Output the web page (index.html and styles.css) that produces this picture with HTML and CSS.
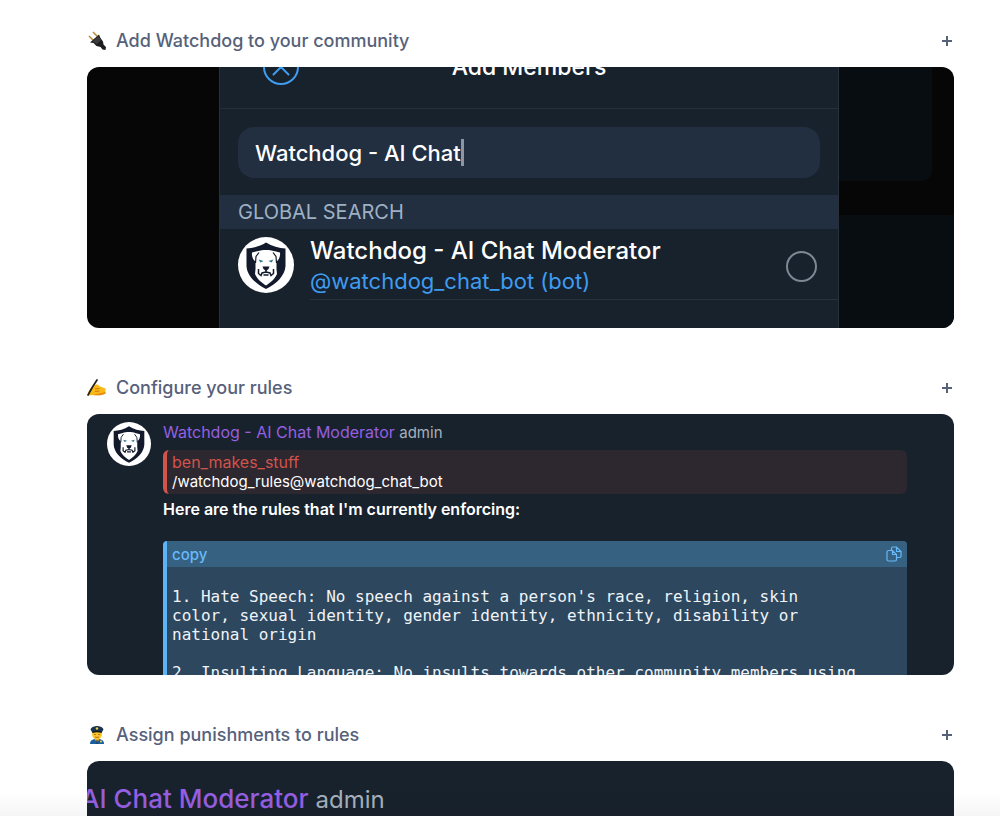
FILE: index.html
```
<!DOCTYPE html>
<html lang="en">
<head>
  <meta charset="UTF-8">
  <meta name="viewport" content="width=device-width, initial-scale=1.0">
  <title>Watchdog - Getting Started</title>
  <link rel="stylesheet" href="styles.css">
</head>
<body>
  <!-- Shared logo -->
  <svg class="sprite" aria-hidden="true">
    <symbol id="watchdog-logo" viewBox="0 0 56 56">
      <circle cx="28" cy="28" r="28" fill="#fff"/>
      <path d="M28 5.500C22 9.500 15 11 8.500 11.500V29C9 39 18 47 28 52C38 47 47 39 47.500 29V11.500C41 11 34 9.500 28 5.500Z" fill="#121a2b"/>
      <path d="M20 14C24 12.500 32 12.500 36 14L42 15.500C42.500 19 41 23 38.500 24.500L38.500 32L39 37C37 42 32 46 28 48.500C24 46 19 42 17 37L17.500 32L17.500 24.500C15 23 13.500 19 14 15.500Z" fill="#fff"/>
      <path d="M21 15.500L18 19.500L17.500 26M35 15.500L38 19.500L38.500 26" fill="none" stroke="#121a2b" stroke-width="1.200"/>
      <path d="M20.500 22.500L25.500 24L22.500 25.500ZM35.500 22.500L30.500 24L33.500 25.500Z" fill="#2c7488"/>
      <path d="M24.500 29.500H31.500L30.500 32L28 34L25.500 32Z" fill="#121a2b"/>
      <path d="M28 33V35L24 36L23 38.500L20.500 36.500V32M28 35L32 36L33 38.500L35.500 36.500V32M25.500 38H30.500" fill="none" stroke="#121a2b" stroke-width="1.500"/>
    </symbol>
  </svg>

  <main class="steps">
    <section class="step">
      <h2 class="step-title">
        <button type="button" class="step-toggle">
          <svg class="emoji" viewBox="0 0 20 20" aria-hidden="true">
            <path d="M2 5L7 10M6 1L11 6" stroke="#b98a35" stroke-width="1.500"/>
            <path d="M12 3.500L13.500 7L16 10.500L16.500 13.500L19 16L18.500 19L15.500 18.500L13.500 16L9.500 15L6.500 12L3 11.500Z" fill="#1d1d1f"/>
            <path d="M5.500 10.500L11.500 5L14 9L10 13Z" fill="#3b3b3e"/>
          </svg>
          <span class="step-name">Add Watchdog to your community</span>
          <svg class="plus" viewBox="0 0 12 12" aria-hidden="true"><path d="M6 1V11M1 6H11" stroke="currentColor" stroke-width="2"/></svg>
        </button>
      </h2>
      <div class="shot shot-search">
        <div class="dialog">
          <div class="dialog-head">
            <button type="button" class="close" aria-label="Close">
              <svg viewBox="0 0 36 36"><circle cx="18" cy="18" r="17" /><path d="M10.500 10.500L25.500 25.500M25.500 10.500L10.500 25.500"/></svg>
            </button>
            <h3>Add Members</h3>
          </div>
          <div class="search">
            <input type="text" value="Watchdog - AI Chat" aria-label="Search members">
            <span class="caret"></span>
          </div>
          <div class="group">GLOBAL SEARCH</div>
          <label class="result">
            <svg class="avatar" aria-hidden="true"><use href="#watchdog-logo"/></svg>
            <span class="result-body">
              <span class="result-text">
                <span class="result-name">Watchdog - AI Chat Moderator</span>
                <span class="result-handle">@watchdog_chat_bot (bot)</span>
              </span>
              <input type="radio" name="member">
            </span>
          </label>
        </div>
        <div class="backdrop">
          <div class="backdrop-top"></div>
          <div class="backdrop-bottom"></div>
        </div>
      </div>
    </section>

    <section class="step">
      <h2 class="step-title">
        <button type="button" class="step-toggle">
          <svg class="emoji" viewBox="0 0 20 20" aria-hidden="true">
            <path d="M1 15C2 11 5 8 8 7C10 6 12 7 12 8L18.500 10.500V15.500C15 17.500 10 17.500 6 17L1 17.500Z" fill="#fbb916"/>
            <path d="M8 11L12.500 10.500M8 13.500L12.500 13" stroke="#d37b10" stroke-width="1"/>
            <path d="M6 17L18.500 14V15.500C15 17.500 10 17.500 6 17Z" fill="#e58a12"/>
            <path d="M10 2L5.500 9L1 17" fill="none" stroke="#222" stroke-width="1.700" stroke-linecap="round"/>
          </svg>
          <span class="step-name">Configure your rules</span>
          <svg class="plus" viewBox="0 0 12 12" aria-hidden="true"><path d="M6 1V11M1 6H11" stroke="currentColor" stroke-width="2"/></svg>
        </button>
      </h2>
      <div class="shot shot-rules">
        <svg class="avatar" aria-hidden="true"><use href="#watchdog-logo"/></svg>
        <div class="message">
          <p class="author">Watchdog - AI Chat Moderator <span class="role">admin</span></p>
          <blockquote>
            <span class="quote-author">ben_makes_stuff</span>
            <span class="quote-text">/watchdog_rules@watchdog_chat_bot</span>
          </blockquote>
          <p class="intro">Here are the rules that I'm currently enforcing:</p>
          <div class="code">
            <button type="button" class="copy">
              copy
              <svg viewBox="0 0 16 16" aria-hidden="true">
                <path d="M2.500 4.500H6.500L10.500 8.500V13.500Q10.500 15 9 15H2.500Q1 15 1 13.500V6Q1 4.500 2.500 4.500ZM6.500 4.500V8.500H10.500M5.500 4.500V2.500Q5.500 1 7 1H10.500L15 5.500V10Q15 11.500 13.500 11.500H10.500M10.500 1V5.500H15"/>
              </svg>
            </button>
<pre>1. Hate Speech: No speech against a person's race, religion, skin
color, sexual identity, gender identity, ethnicity, disability or
national origin

2. Insulting Language: No insults towards other community members using</pre>
          </div>
        </div>
      </div>
    </section>

    <section class="step">
      <h2 class="step-title">
        <button type="button" class="step-toggle">
          <svg class="emoji" viewBox="0 0 20 20" aria-hidden="true">
            <path d="M3 19C3 15.500 5 14 10 14S17 15.500 17 19Z" fill="#1d5f9c"/>
            <path d="M8 12H12V15L10 17L8 15Z" fill="#eda421"/>
            <ellipse cx="10" cy="9" rx="5" ry="5.500" fill="#fdc52b"/>
            <path d="M3.500 4.500C4 2 8 1 10 1S16 2 16.500 4.500L15 7H5Z" fill="#193451"/>
            <path d="M5 7Q10 5 15 7L14.500 8Q10 6.500 5.500 8Z" fill="#111"/>
            <circle cx="10" cy="3.500" r="1.200" fill="#f6cf42"/>
            <path d="M8 9V10M12 9V10" stroke="#553208"/>
            <path d="M8 12Q10 13 12 12" fill="none" stroke="#9a5a13" stroke-width=".8"/>
            <path d="M10 15V19" stroke="#12385f"/>
            <circle cx="14" cy="16.500" r="1" fill="#f6cf42"/>
          </svg>
          <span class="step-name">Assign punishments to rules</span>
          <svg class="plus" viewBox="0 0 12 12" aria-hidden="true"><path d="M6 1V11M1 6H11" stroke="currentColor" stroke-width="2"/></svg>
        </button>
      </h2>
      <div class="shot shot-punish">
        <p class="author">AI Chat Moderator <span class="role">admin</span></p>
      </div>
    </section>
  </main>
  <div class="page-fade"></div>
</body>
</html>
```
FILE: styles.css
```
* {
  box-sizing: border-box;
}

body {
  margin: 0;
  background-color: #ffffff;
  font-family: Inter, Arial, sans-serif;
}

h2, h3, p, pre, blockquote {
  margin: 0;
}

button {
  font: inherit;
  color: inherit;
  background: none;
  border: none;
  padding: 0;
  cursor: pointer;
}

.sprite {
  display: none;
}

.steps {
  display: flex;
  flex-direction: column;
  gap: 46px;
  padding: 27px 46px 46px 87px;
}

.step {
  display: flex;
  flex-direction: column;
  gap: 12px;
}

.step-title {
  font-size: 18px;
  font-weight: 500;
  line-height: 28px;
  color: #56617a;
}

.step-toggle {
  display: flex;
  align-items: center;
  width: 100%;
  text-align: left;
}

.emoji {
  width: 20px;
  height: 20px;
  margin-right: 9px;
  flex: none;
}

.step-name {
  flex: 1;
}

.plus {
  width: 12px;
  height: 12px;
  margin-right: 1px;
}

.shot {
  height: 261px;
  overflow: hidden;
  border-radius: 12px;
  background-color: #18222d;
  color: #ffffff;
}

/* Member search */
.shot-search {
  display: flex;
  background-color: #060606;
  padding-left: 132px;
}

.dialog {
  flex: 1;
  margin-top: -26px;
  border: solid #27303b;
  border-width: 0 1px;
  background-color: #18222d;
}

.dialog-head {
  display: grid;
  grid-template-columns: 1fr auto 1fr;
  align-items: center;
  height: 68px;
  padding: 8px 43px 24px;
  border-bottom: 1px solid #25303d;
}

.dialog-head h3 {
  font-size: 23px;
  font-weight: 500;
  line-height: 36px;
}

.close, .close svg {
  display: block;
  width: 36px;
  height: 36px;
}

.close svg {
  fill: none;
  stroke: #3f9cf0;
  stroke-width: 2;
  stroke-linecap: round;
}

.search {
  display: flex;
  align-items: center;
  height: 51px;
  margin: 18px 18px 17px;
  padding: 0 17px;
  border-radius: 16px;
  background-color: #212f40;
}

.search input {
  field-sizing: content;
  padding: 0;
  border: none;
  outline: none;
  background: none;
  color: #ffffff;
  font: 500 22px Inter, Arial, sans-serif;
}

.caret {
  width: 3px;
  height: 27px;
  background-color: #8a96a6;
}

.group {
  padding-left: 18px;
  background-color: #212f40;
  color: #9fb0c3;
  font-size: 20px;
  line-height: 34px;
}

.result {
  display: flex;
  align-items: center;
  padding-left: 18px;
}

.result .avatar {
  width: 56px;
  height: 56px;
  margin-right: 16px;
}

.result-body {
  flex: 1;
  display: flex;
  align-items: center;
  justify-content: space-between;
  padding: 7px 21px 3px 0;
  border-bottom: 1px solid #27313d;
}

.result-text {
  display: flex;
  flex-direction: column;
  line-height: 30px;
}

.result-name {
  font-size: 24px;
  font-weight: 500;
}

.result-handle {
  font-size: 22px;
  color: #3f9cf0;
}

.result input {
  appearance: none;
  width: 31px;
  height: 31px;
  margin: 0;
  border: 2px solid #7d8894;
  border-radius: 50%;
}

.backdrop {
  display: flex;
  flex-direction: column;
  width: 115px;
}

.backdrop-top {
  height: 114px;
  margin-right: 22px;
  border-bottom-right-radius: 10px;
  background-color: #070d11;
}

.backdrop-bottom {
  flex: 1;
  margin-top: 34px;
  background-color: #070d11;
}

/* Rules message */
.shot-rules {
  display: flex;
  gap: 12px;
  padding: 8px 47px 0 20px;
}

.shot-rules .avatar {
  flex: none;
  width: 44px;
  height: 44px;
}

.message {
  flex: 1;
  font-size: 16px;
}

.author {
  color: #965fe0;
  line-height: 20px;
}

.role {
  color: #a5b0bc;
  font-weight: 400;
}

.message .role {
  font-size: 15px;
}

blockquote {
  display: flex;
  flex-direction: column;
  margin-top: 7px;
  padding: 3px 5px;
  border-left: 4px solid #d0544a;
  border-radius: 6px;
  background-color: #2d2730;
  line-height: 19px;
}

.quote-author {
  color: #d0544a;
}

.quote-text {
  font-size: 15px;
}

.intro {
  margin: 5px 0 22px;
  font-weight: 600;
  line-height: 20px;
}

.code {
  border-left: 4px solid #5cb3f5;
  border-radius: 4px 4px 0 0;
  background-color: #2c475e;
  overflow: hidden;
}

.copy {
  display: flex;
  align-items: center;
  justify-content: space-between;
  width: 100%;
  height: 26px;
  padding: 0 5px;
  background-color: #376180;
  color: #66b9fb;
  font-size: 15px;
  font-weight: 500;
}

.copy svg {
  width: 16px;
  height: 16px;
  fill: none;
  stroke: #66b9fb;
  stroke-width: 1.2;
}

pre {
  padding: 20px 5px;
  font: 16px/19px "DejaVu Sans Mono", monospace;
  color: #f0f4f8;
}

/* Punishments message */
.shot-punish .author {
  margin-left: -6px;
  padding-top: 20px;
  font-size: 26px;
  font-weight: 500;
  line-height: 36px;
  white-space: nowrap;
}

.shot-punish .role {
  font-size: 24px;
}

.page-fade {
  position: fixed;
  bottom: 0;
  left: 0;
  right: 0;
  height: 24px;
  background: linear-gradient(transparent, rgba(0, 0, 0, 0.04));
  pointer-events: none;
}
```
